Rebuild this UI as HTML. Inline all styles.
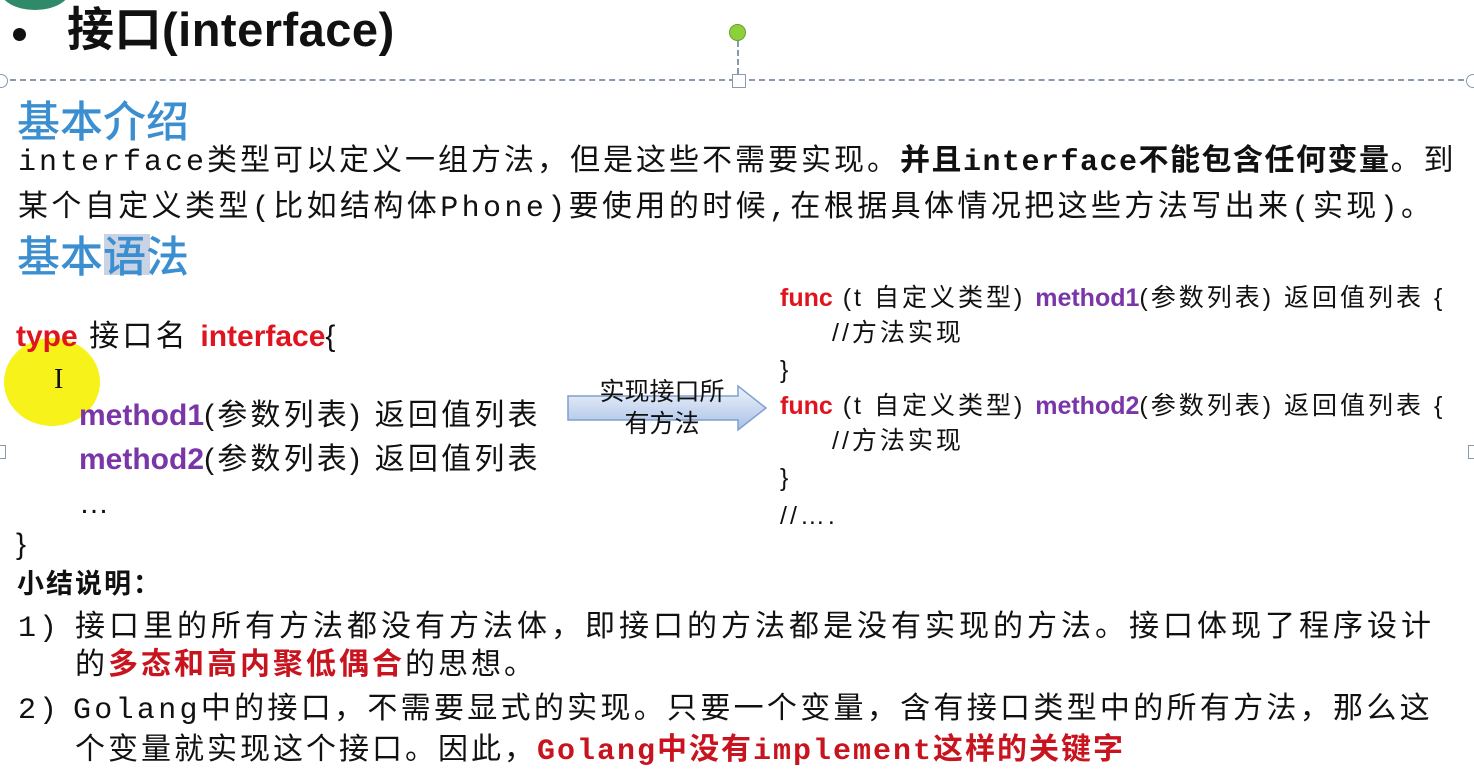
<!DOCTYPE html>
<html><head><meta charset="utf-8"><style>
body{margin:0;width:1474px;height:784px;background:#fff;position:relative;overflow:hidden;font-family:"Liberation Sans","Noto Sans CJK SC",sans-serif;color:#111}
.a{position:absolute;white-space:nowrap;line-height:1}
.m{font-family:"Liberation Mono","Noto Sans CJK SC",monospace;font-size:30px;letter-spacing:3px}
.h{font-size:43px;color:#3b8fd0;font-family:"Noto Sans CJK SC",sans-serif;font-weight:500}
.r{color:#e0141e;font-weight:bold}
.p{color:#7a35a8;font-weight:bold}
.c{font-size:30px;letter-spacing:3.2px}
.f{font-size:25px;letter-spacing:3px}
.dr{color:#c8141e;font-weight:bold}
</style></head><body>
<div class="a" style="left:0;top:-30px;width:70px;height:40px;border-radius:50%;background:#2f8a6a"></div>
<div class="a" style="left:13px;top:28px;width:13px;height:13px;border-radius:50%;background:#111"></div>
<div class="a" style="left:67px;top:6px;font-size:47px;font-weight:bold;letter-spacing:0.5px">接口(interface)</div>
<div class="a" style="left:0;top:79px;width:1474px;border-top:2px dashed #8a9aae"></div>
<div class="a" style="left:729px;top:24px;width:17px;height:17px;border-radius:50%;background:#8cd13c;border:1px solid #6aa02a;box-sizing:border-box"></div>
<div class="a" style="left:737px;top:41px;height:33px;border-left:2px dashed #8a9aae"></div>
<div class="a" style="left:732px;top:74px;width:12px;height:12px;border:1px solid #8a9aae;background:#fff"></div>
<div class="a" style="left:-6px;top:74px;width:12px;height:12px;border-radius:50%;border:1px solid #8a9aae;background:#fff"></div>
<div class="a" style="left:1466px;top:74px;width:12px;height:12px;border-radius:50%;border:1px solid #8a9aae;background:#fff"></div>
<div class="a h" style="left:17px;top:98px">基本介绍</div>
<div class="a m" style="left:18px;top:148px">interface类型可以定义一组方法，但是这些不需要实现。<b style="letter-spacing:1.5px">并且interface不能包含任何变量</b>。到</div>
<div class="a m" style="left:18px;top:194px;letter-spacing:3.4px">某个自定义类型(比如结构体Phone)要使用的时候,在根据具体情况把这些方法写出来(实现)。</div>
<div class="a" style="left:104px;top:234px;width:46px;height:41px;background:#c9d3e3"></div>
<div class="a h" style="left:17px;top:233px">基本语法</div>
<div class="a" style="left:4px;top:338px;width:96px;height:88px;border-radius:50%;background:#f6f21a"></div>
<div class="a" style="left:54px;top:366px;font-size:28px;font-family:'Liberation Serif',serif">I</div>
<div class="a c" style="left:16px;top:322px"><span class="r" style="letter-spacing:0">type</span> 接口名 <span class="r" style="letter-spacing:0">interface</span>{</div>
<div class="a c" style="left:79px;top:401px"><span class="p" style="letter-spacing:0">method1</span>(参数列表) 返回值列表</div>
<div class="a c" style="left:79px;top:445px"><span class="p" style="letter-spacing:0">method2</span>(参数列表) 返回值列表</div>
<div class="a c" style="left:79px;top:489px">…</div>
<div class="a c" style="left:16px;top:530px">}</div>
<svg class="a" style="left:566px;top:384px" width="204" height="52"><defs><linearGradient id="g" x1="0" y1="0" x2="0" y2="1"><stop offset="0" stop-color="#eef3fb"/><stop offset="1" stop-color="#a9c1e6"/></linearGradient></defs><path d="M2 12 H172 V2 L200 24 L172 46 V36 H2 Z" fill="url(#g)" stroke="#7f9fd0" stroke-width="1.5"/></svg>
<div class="a" style="left:587px;top:376px;font-size:25px;text-align:center;line-height:32px;width:150px">实现接口所<br>有方法</div>
<div class="a f" style="left:780px;top:286px"><span class="r" style="letter-spacing:0">func</span> (t 自定义类型) <span class="p" style="letter-spacing:0">method1</span>(参数列表) 返回值列表 {</div>
<div class="a f" style="left:832px;top:321px">//方法实现</div>
<div class="a f" style="left:780px;top:358px">}</div>
<div class="a f" style="left:780px;top:394px"><span class="r" style="letter-spacing:0">func</span> (t 自定义类型) <span class="p" style="letter-spacing:0">method2</span>(参数列表) 返回值列表 {</div>
<div class="a f" style="left:832px;top:429px">//方法实现</div>
<div class="a f" style="left:780px;top:466px">}</div>
<div class="a f" style="left:780px;top:504px">//….</div>
<div class="a" style="left:1468px;top:445px;width:8px;height:12px;border:1px solid #8a9aae"></div>
<div class="a" style="left:-4px;top:445px;width:8px;height:12px;border:1px solid #8a9aae"></div>
<div class="a" style="left:17px;top:568px;font-size:27px;font-weight:bold;font-family:'Noto Sans CJK SC',sans-serif;letter-spacing:2px">小结说明：</div>
<div class="a m" style="left:18px;top:614px">1)</div>
<div class="a m" style="left:75px;top:614px;letter-spacing:4px">接口里的所有方法都没有方法体，即接口的方法都是没有实现的方法。接口体现了程序设计</div>
<div class="a m" style="left:75px;top:652px">的<span class="dr">多态和高内聚低偶合</span>的思想。</div>
<div class="a m" style="left:18px;top:696px">2)</div>
<div class="a m" style="left:73px;top:696px;letter-spacing:3.3px">Golang中的接口，不需要显式的实现。只要一个变量，含有接口类型中的所有方法，那么这</div>
<div class="a m" style="left:75px;top:737px">个变量就实现这个接口。因此，<span class="dr" style="letter-spacing:2px">Golang中没有implement这样的关键字</span></div>
</body></html>
